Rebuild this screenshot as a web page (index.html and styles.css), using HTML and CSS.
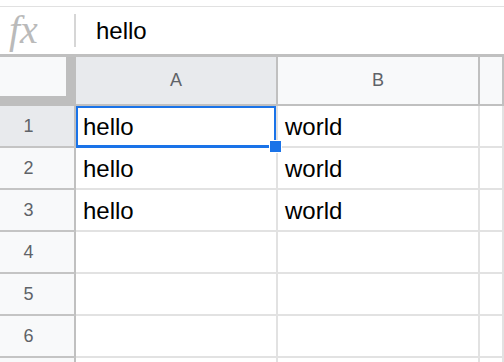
FILE: index.html
```html
<!DOCTYPE html>
<html lang="en">
<head>
  <meta charset="UTF-8" />
  <title>Sheet</title>
  <link rel="stylesheet" href="styles.css">
</head>
<body>
  <div class="formula-bar">
    <span class="fx">fx</span>
    <span class="divider"></span>
    <span class="formula">hello</span>
  </div>

  <div class="sheet">
    <div class="corner"><div class="corner-box"></div></div>
    <div class="col-head active">A</div>
    <div class="col-head">B</div>
    <div class="col-head"></div>

    <div class="row-head active">1</div>
    <div class="cell selected">hello<span class="handle"></span></div>
    <div class="cell">world</div>
    <div class="cell"></div>

    <div class="row-head">2</div>
    <div class="cell">hello</div>
    <div class="cell">world</div>
    <div class="cell"></div>

    <div class="row-head">3</div>
    <div class="cell">hello</div>
    <div class="cell">world</div>
    <div class="cell"></div>

    <div class="row-head">4</div>
    <div class="cell"></div>
    <div class="cell"></div>
    <div class="cell"></div>

    <div class="row-head">5</div>
    <div class="cell"></div>
    <div class="cell"></div>
    <div class="cell"></div>

    <div class="row-head">6</div>
    <div class="cell"></div>
    <div class="cell"></div>
    <div class="cell"></div>

    <div class="row-head last"></div>
    <div class="cell last"></div>
    <div class="cell last"></div>
    <div class="cell last"></div>
  </div>
</body>
</html>
```

FILE: styles.css
```css
body {
  margin: 0;
  width: 504px;
  height: 362px;
  overflow: hidden;
  background: #fff;
  font-family: 'Liberation Sans', Arial, sans-serif;
}
.formula-bar {
  margin-top: 6px;
  border-top: 1px solid #e1e1e1;
  height: 47px;
  display: flex;
  align-items: center;
}
.fx {
  font-family: 'Liberation Serif', serif;
  font-style: italic;
  font-size: 40px;
  line-height: 40px;
  color: #bababa;
  width: 74px;
  padding-left: 9px;
  box-sizing: border-box;
  margin-top: -1px;
}
.divider {
  width: 2px;
  height: 33px;
  background: #d6d6d6;
}
.formula {
  margin-left: 20px;
  font-size: 24px;
  color: #000;
}
.sheet {
  border-top: 3px solid #c0c0c0;
  display: grid;
  grid-template-columns: 76px 202px 202px 1fr;
  grid-template-rows: 49px repeat(6, 42px) 4px;
}
.corner {
  background: #bebebe;
}
.corner-box {
  width: 66px;
  height: 39px;
  background: #f8f9fa;
}
.col-head {
  background: #f8f9fa;
  border-right: 2px solid #c0c0c0;
  border-bottom: 2px solid #c0c0c0;
  color: #5f6368;
  font-size: 18px;
  display: flex;
  align-items: center;
  justify-content: center;
}
.row-head {
  background: #f8f9fa;
  border-right: 2px solid #c0c0c0;
  border-bottom: 2px solid #c4c4c4;
  color: #5f6368;
  font-size: 18px;
  padding-right: 17px;
  display: flex;
  align-items: center;
  justify-content: center;
}
.active {
  background: #e8eaed;
}
.cell {
  position: relative;
  border-right: 2px solid #e2e2e2;
  border-bottom: 2px solid #e2e2e2;
  font-size: 24px;
  color: #000;
  padding-left: 7px;
  padding-top: 2px;
  display: flex;
  align-items: center;
}
.last {
  border-bottom: none;
}
.selected::after {
  content: '';
  position: absolute;
  left: 0;
  top: 0;
  right: 0;
  bottom: -2px;
  border: 2px solid #1a73e8;
  border-bottom-width: 3px;
}
.handle {
  position: absolute;
  left: 193px;
  top: 34px;
  width: 11px;
  height: 11px;
  background: #1a73e8;
  border: 1px solid #fff;
  z-index: 1;
}
```
